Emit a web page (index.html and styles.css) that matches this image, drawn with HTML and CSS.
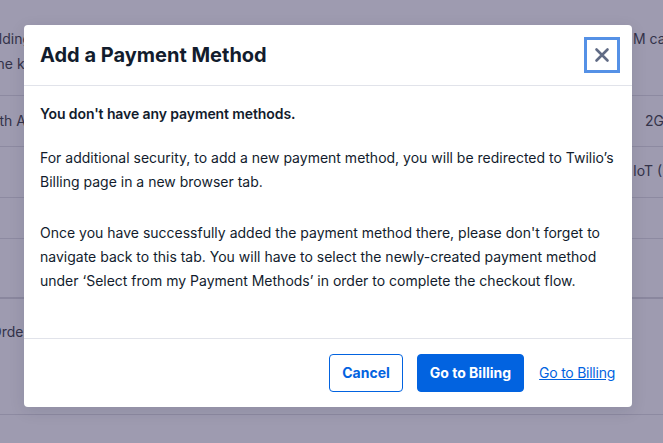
FILE: index.html
```html
<!DOCTYPE html>
<html>
<head>
<meta charset="utf-8">
<link rel="stylesheet" href="styles.css">
</head>
<body>
<div class="bg">
  <div class="row r1">
    <div class="cells">
      <div class="cell-left"><span class="shift">Building</span><span class="shift">the key</span></div>
      <div class="cell-right"><span>M cat</span></div>
    </div>
  </div>
  <div class="row r2">
    <div class="cells">
      <div class="cell-left"><span class="shift2">North A</span></div>
      <div class="cell-right"><span class="ind">2G</span></div>
    </div>
  </div>
  <div class="row r3">
    <div class="cells">
      <div class="cell-left"></div>
      <div class="cell-right"><span>IoT (U</span></div>
    </div>
  </div>
  <div class="row r4"></div>
  <div class="row r5"></div>
  <div class="row r6">
    <div class="cells">
      <div class="cell-left"><span class="shift3">Order</span></div>
      <div class="cell-right"></div>
    </div>
  </div>
</div>

<div class="modal" role="dialog">
  <div class="modal-header">
    <h2 class="modal-title">Add a Payment Method</h2>
    <button class="close" aria-label="Close">
      <svg width="16" height="16" viewBox="0 0 16 16"><path d="M2.5 2.5 L13.5 13.5 M13.5 2.5 L2.5 13.5" stroke="#606b85" stroke-width="2.6" stroke-linecap="round" fill="none"/></svg>
    </button>
  </div>
  <div class="modal-body">
    <p class="strong">You don't have any payment methods.</p>
    <p class="p1">For additional security, to add a new payment method, you will be redirected to Twilio’s Billing page in a new browser tab.</p>
    <p class="p2">Once you have successfully added the payment method there, please don't forget to navigate back to this tab. You will have to select the newly-created payment method under ‘Select from my Payment Methods’ in order to complete the checkout flow.</p>
  </div>
  <div class="modal-footer">
    <button class="btn btn-secondary">Cancel</button>
    <button class="btn btn-primary">Go to Billing</button>
    <a class="link" href="#">Go to Billing</a>
  </div>
</div>
</body>
</html>
```

FILE: styles.css
```css
* { box-sizing: border-box; }
html, body {
  margin: 0;
  padding: 0;
}
body {
  width: 663px;
  height: 443px;
  overflow: hidden;
  background: #9e9bb0;
  font-family: Inter, "Noto Sans", sans-serif;
  color: #121c2d;
}
.bg {
  display: flex;
  flex-direction: column;
  width: 663px;
}
.row {
  border-bottom: 1px solid #8d8aa1;
  color: #34334a;
  font-size: 14px;
  line-height: 25px;
}
.r1 { height: 96px; padding-top: 26px; }
.r2 { height: 51px; padding-top: 12px; }
.r3 { height: 51px; padding-top: 11px; }
.r4 { height: 41px; }
.r5 { height: 60px; border-bottom: 2px solid #8a879e; }
.r6 { height: 116px; padding-top: 20px; }
.cells {
  display: flex;
  justify-content: space-between;
}
.cell-left {
  display: flex;
  flex-direction: column;
  white-space: nowrap;
}
.shift { margin-left: -22px; }
.shift:nth-child(2) { margin-left: -8px; }
.shift2 { margin-left: -25px; }
.shift3 { margin-left: -9px; }
.cell-right {
  display: flex;
  flex-direction: column;
  white-space: nowrap;
  width: 30px;
}
.ind { padding-left: 12px; }

.modal {
  position: absolute;
  left: 24px;
  top: 25px;
  width: 608px;
  background: #ffffff;
  border-radius: 4px;
  box-shadow: 0 4px 16px rgba(18, 28, 45, 0.1);
  display: flex;
  flex-direction: column;
}
.modal-header {
  display: flex;
  align-items: center;
  justify-content: space-between;
  padding: 12px 12px 12px 16px;
  border-bottom: 1px solid #e1e3ea;
}
.modal-title {
  margin: 0;
  font-size: 20px;
  line-height: 28px;
  font-weight: 700;
  color: #121c2d;
}
.close {
  width: 36px;
  height: 36px;
  padding: 0;
  border: 3px solid #5591e6;
  background: #fff;
  display: flex;
  align-items: center;
  justify-content: center;
}
.modal-body {
  padding: 16px 16px 45px;
  font-size: 14px;
  line-height: 24px;
  color: #121c2d;
}
.modal-body p { margin: 0; }
.strong { font-weight: 600; margin-bottom: 20px !important; letter-spacing: -0.1px; }
.p1 { margin-bottom: 27px !important; }
.modal-footer {
  display: flex;
  align-items: center;
  justify-content: flex-end;
  padding: 15px 17px 15px 16px;
  border-top: 1px solid #e1e3ea;
}
.btn {
  font-family: Inter, "Noto Sans", sans-serif;
  font-size: 14px;
  font-weight: 700;
  line-height: 20px;
  height: 38px;
  padding: 8px 12px;
  border-radius: 4px;
}
.btn-secondary {
  background: #fff;
  color: #0263e0;
  border: 1px solid #0263e0;
  margin-right: 14px;
}
.btn-primary {
  background: #0263e0;
  color: #fff;
  border: 1px solid #0263e0;
  margin-right: 15px;
}
.link {
  font-size: 14px;
  line-height: 20px;
  color: #0263e0;
  text-decoration: underline;
  letter-spacing: -0.25px;
}
```
